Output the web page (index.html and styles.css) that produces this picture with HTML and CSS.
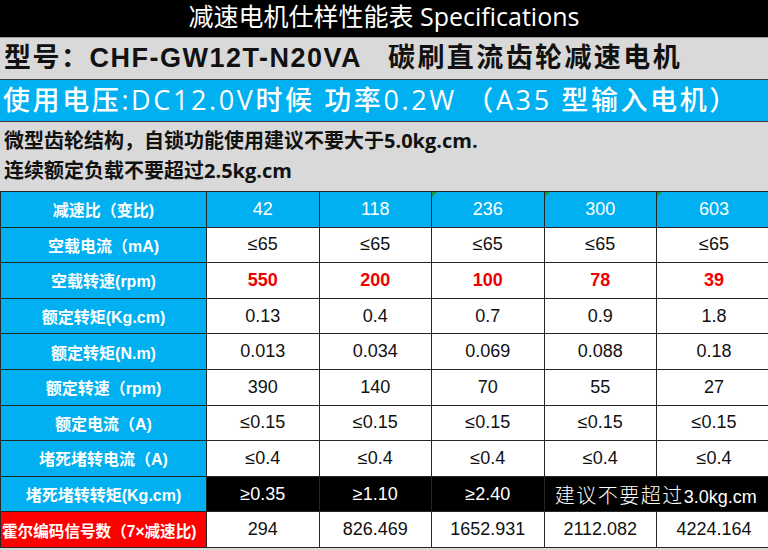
FILE: index.html
```html
<!DOCTYPE html>
<html lang="zh-CN">
<head>
<meta charset="utf-8">
<title>减速电机仕样性能表 Specifications</title>
<link rel="stylesheet" href="styles.css">
</head>
<body>
<div class="sheet">
  <div class="title">减速电机仕样性能表 Specifications</div>
  <div class="model"><span class="model-no">型号：CHF-GW12T-N20VA</span><span class="model-cn">碳刷直流齿轮减速电机</span></div>
  <div class="power">使用电压:DC12.0V时候&nbsp;功率0.2W （A35 型输入电机）</div>
  <div class="notes">
    <div>微型齿轮结构，自锁功能使用建议不要大于5.0kg.cm.</div>
    <div>连续额定负载不要超过2.5kg.cm</div>
  </div>
  <div class="table-wrap">
    <table class="spec">
      <colgroup>
        <col class="c-label"><col class="c-val"><col class="c-val"><col class="c-val"><col class="c-val"><col class="c-last">
      </colgroup>
      <tr class="head">
        <th class="lbl">减速比（变比)</th>
        <td>42</td><td>118</td><td class="flag">236</td><td class="flag">300</td><td class="flag">603</td>
      </tr>
      <tr>
        <th class="lbl">空载电流（mA)</th>
        <td>≤65</td><td>≤65</td><td>≤65</td><td>≤65</td><td>≤65</td>
      </tr>
      <tr class="red">
        <th class="lbl">空载转速(rpm)</th>
        <td>550</td><td>200</td><td>100</td><td>78</td><td>39</td>
      </tr>
      <tr>
        <th class="lbl">额定转矩(Kg.cm)</th>
        <td>0.13</td><td>0.4</td><td>0.7</td><td>0.9</td><td>1.8</td>
      </tr>
      <tr>
        <th class="lbl">额定转矩(N.m)</th>
        <td>0.013</td><td>0.034</td><td>0.069</td><td>0.088</td><td>0.18</td>
      </tr>
      <tr>
        <th class="lbl">额定转速（rpm)</th>
        <td>390</td><td>140</td><td>70</td><td>55</td><td>27</td>
      </tr>
      <tr>
        <th class="lbl">额定电流（A)</th>
        <td>≤0.15</td><td>≤0.15</td><td>≤0.15</td><td>≤0.15</td><td>≤0.15</td>
      </tr>
      <tr>
        <th class="lbl">堵死堵转电流（A)</th>
        <td>≤0.4</td><td>≤0.4</td><td>≤0.4</td><td>≤0.4</td><td>≤0.4</td>
      </tr>
      <tr class="dark">
        <th class="lbl">堵死堵转转矩(Kg.cm)</th>
        <td>≥0.35</td><td>≥1.10</td><td>≥2.40</td><td colspan="2" class="advice"><span class="cjk">建议不要超过</span>3.0kg.cm</td>
      </tr>
      <tr>
        <th class="lbl hall">霍尔编码信号数（7×减速比)</th>
        <td>294</td><td>826.469</td><td>1652.931</td><td>2112.082</td><td>4224.164</td>
      </tr>
    </table>
  </div>
  <div class="foot"></div>
</div>
</body>
</html>
```

FILE: styles.css
```css
html, body {
  margin: 0;
  padding: 0;
  background: #d9d9d9;
  overflow: hidden;
}
.sheet {
  width: 768px;
  height: 550px;
  overflow: hidden;
}
.title {
  height: 37px;
  background: #000;
  color: #fff;
  border-bottom: 1px solid #9a9a9a;
  text-align: center;
  font-family: "Open Sans", "Noto Sans CJK SC", sans-serif;
  font-size: 25px;
  line-height: 32px;
  white-space: nowrap;
}
.model {
  display: flex;
  gap: 26px;
  height: 41px;
  background: #d9d9d9;
  border-bottom: 1px solid #3a3a3a;
  padding-left: 4px;
  font-family: "Liberation Sans", "Noto Sans CJK SC", sans-serif;
  font-weight: bold;
  font-size: 27px;
  letter-spacing: 1.5px;
  line-height: 41px;
  color: #111;
  white-space: nowrap;
}
.model-cn {
  letter-spacing: 2.4px;
}
.power {
  height: 41px;
  background: #00b0f0;
  border-bottom: 1px solid #3a3a3a;
  padding-left: 3px;
  color: #fff;
  font-family: "Open Sans", "Noto Sans CJK SC", sans-serif;
  font-weight: 500;
  font-size: 27px;
  letter-spacing: 2.6px;
  line-height: 40px;
  white-space: nowrap;
}
.notes {
  height: 69px;
  box-sizing: border-box;
  padding: 4px 0 0 4px;
  background: #d9d9d9;
  font-family: "Open Sans", "Noto Sans CJK SC", sans-serif;
  font-weight: bold;
  font-size: 20px;
  line-height: 30px;
  color: #111;
  white-space: nowrap;
}
.table-wrap {
  width: 768px;
  overflow: hidden;
}
.spec {
  width: 771px;
  table-layout: fixed;
  border-collapse: collapse;
  font-family: "Liberation Sans", "Noto Sans CJK SC", sans-serif;
}
.c-label { width: 206px; }
.c-val { width: 112.5px; }
.c-last { width: 115px; }
.spec th, .spec td {
  border: 1px solid #262626;
  height: 34.6px;
  padding: 0;
  text-align: center;
  white-space: nowrap;
  overflow: hidden;
}
.spec td {
  background: #fff;
  color: #111;
  font-size: 18px;
  position: relative;
}
.spec th.lbl {
  background: #00b0f0;
  color: #fff;
  font-weight: bold;
  font-size: 16px;
}
.spec th.hall {
  background: #ff0000;
  font-size: 15.6px;
  letter-spacing: 0;
  text-align: left;
  padding-left: 1px;
}
.spec tr.head td {
  background: #00b0f0;
  color: #fff;
}
.spec tr.red td {
  color: #f00000;
  font-weight: bold;
}
.spec tr.dark td {
  background: #000;
  color: #fff;
}
.spec td.advice {
  padding-right: 4px;
}
.spec .cjk {
  font-family: "Noto Sans CJK SC", sans-serif;
  font-weight: 300;
  font-size: 20px;
  letter-spacing: 1.5px;
}
.spec td.flag::before {
  content: "";
  position: absolute;
  left: 0;
  top: 0;
  border-top: 5px solid #1f9a3a;
  border-right: 5px solid transparent;
}
.foot {
  height: 3px;
  background: #d9d9d9;
}
```
